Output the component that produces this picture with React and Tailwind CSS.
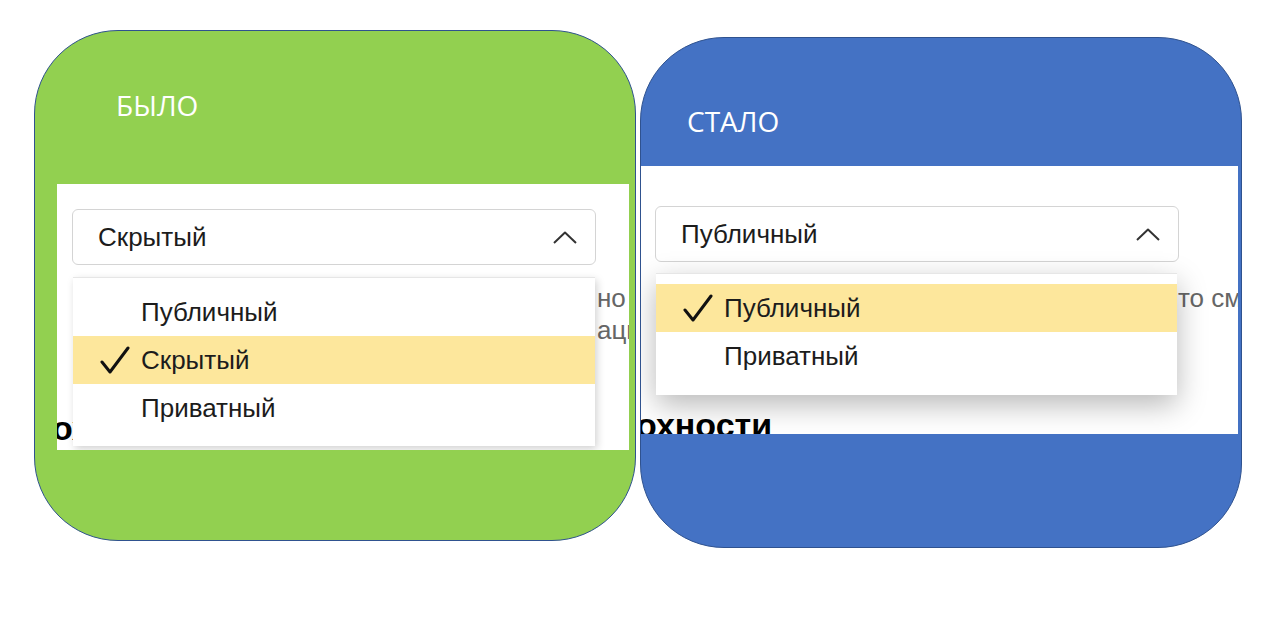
const font = { fontFamily: '"Liberation Sans", Arial, sans-serif' };

const Check = () => (
  <svg width="30" height="28" viewBox="0 0 30 28" fill="none">
    <path d="M2 16 L10 26 L28 2" stroke="#111" strokeWidth="3" strokeLinecap="round" strokeLinejoin="round" />
  </svg>
);

const Chevron = () => (
  <svg width="24" height="13" viewBox="0 0 24 13" fill="none">
    <path d="M1 12 L12 1.5 L23 12" stroke="#333" strokeWidth="2" strokeLinejoin="round" />
  </svg>
);

const Option = ({ label, selected }) => (
  <div className={`h-[48px] flex items-center pl-[27px] ${selected ? 'bg-[#fde79c]' : ''}`}>
    <span className="w-[41px] flex items-center">{selected && <Check />}</span>
    <span className="text-[26px] text-[#1c1c1c]">{label}</span>
  </div>
);

const SelectBox = ({ value, className }) => (
  <div className={`h-[56px] w-[524px] border border-[#d4d4d4] rounded-[6px] bg-white flex items-center justify-between pl-[25px] pr-[18px] ${className}`}>
    <span className="text-[26px] text-[#1c1c1c]">{value}</span>
    <Chevron />
  </div>
);

export default function App() {
  return (
    <div className="w-[1280px] h-[624px] bg-white flex items-start pl-[34px] pt-[30px] gap-[4px] overflow-hidden">
      {/* Было */}
      <div className="w-[602px] h-[511px] shrink-0 rounded-[84px] bg-[#92d050] border-[1.5px] border-[#2f528f] overflow-hidden flex flex-col">
        <div className="pt-[60px] pl-[81px] text-[28px] leading-none text-white" style={{ fontFamily: '"Open Sans", sans-serif' }}>
          БЫЛО
        </div>
        <div className="relative mt-[65px] ml-[22px] w-[572px] h-[266px] bg-white overflow-hidden" style={font}>
          <SelectBox value="Скрытый" className="mt-[25px] ml-[15px]" />
          <div className="mt-[17px] pl-[540px] text-[26px] leading-[32px] text-[#666] whitespace-nowrap">
            <div>но скрыто</div>
            <div>ации</div>
          </div>
          <div className="mt-[63px] -ml-[5px] text-[34px] leading-[38px] font-bold text-black whitespace-nowrap">охности</div>

          <div className="absolute left-[16px] top-[93px] w-[522px] h-[169px] bg-white border-t border-[#e6e6e6] pt-[10px] shadow-[2px_3px_8px_rgba(0,0,0,0.18)]">
            <Option label="Публичный" />
            <Option label="Скрытый" selected />
            <Option label="Приватный" />
          </div>
        </div>
      </div>

      {/* Стало */}
      <div className="mt-[7px] w-[602px] h-[511px] shrink-0 rounded-[84px] bg-[#4472c4] border-[1.5px] border-[#2f528f] overflow-hidden flex flex-col">
        <div className="pt-[69px] pl-[46px] text-[28px] leading-none text-white" style={{ fontFamily: '"Open Sans", sans-serif' }}>
          СТАЛО
        </div>
        <div className="relative mt-[31px] w-[597px] h-[268px] bg-white overflow-hidden" style={font}>
          <SelectBox value="Публичный" className="mt-[40px] ml-[14px]" />
          <div className="mt-[20px] pl-[537px] text-[26px] leading-[32px] text-[#666] whitespace-nowrap">
            <div>то сможет</div>
          </div>
          <div className="mt-[92px] -ml-[5px] text-[34px] leading-[38px] font-bold text-black whitespace-nowrap">охности</div>

          <div className="absolute left-[15px] top-[107px] w-[521px] h-[122px] bg-white border-t border-[#e6e6e6] pt-[10px] shadow-[0_10px_28px_rgba(0,0,0,0.28)]">
            <Option label="Публичный" selected />
            <Option label="Приватный" />
          </div>
        </div>
      </div>
    </div>
  );
}
